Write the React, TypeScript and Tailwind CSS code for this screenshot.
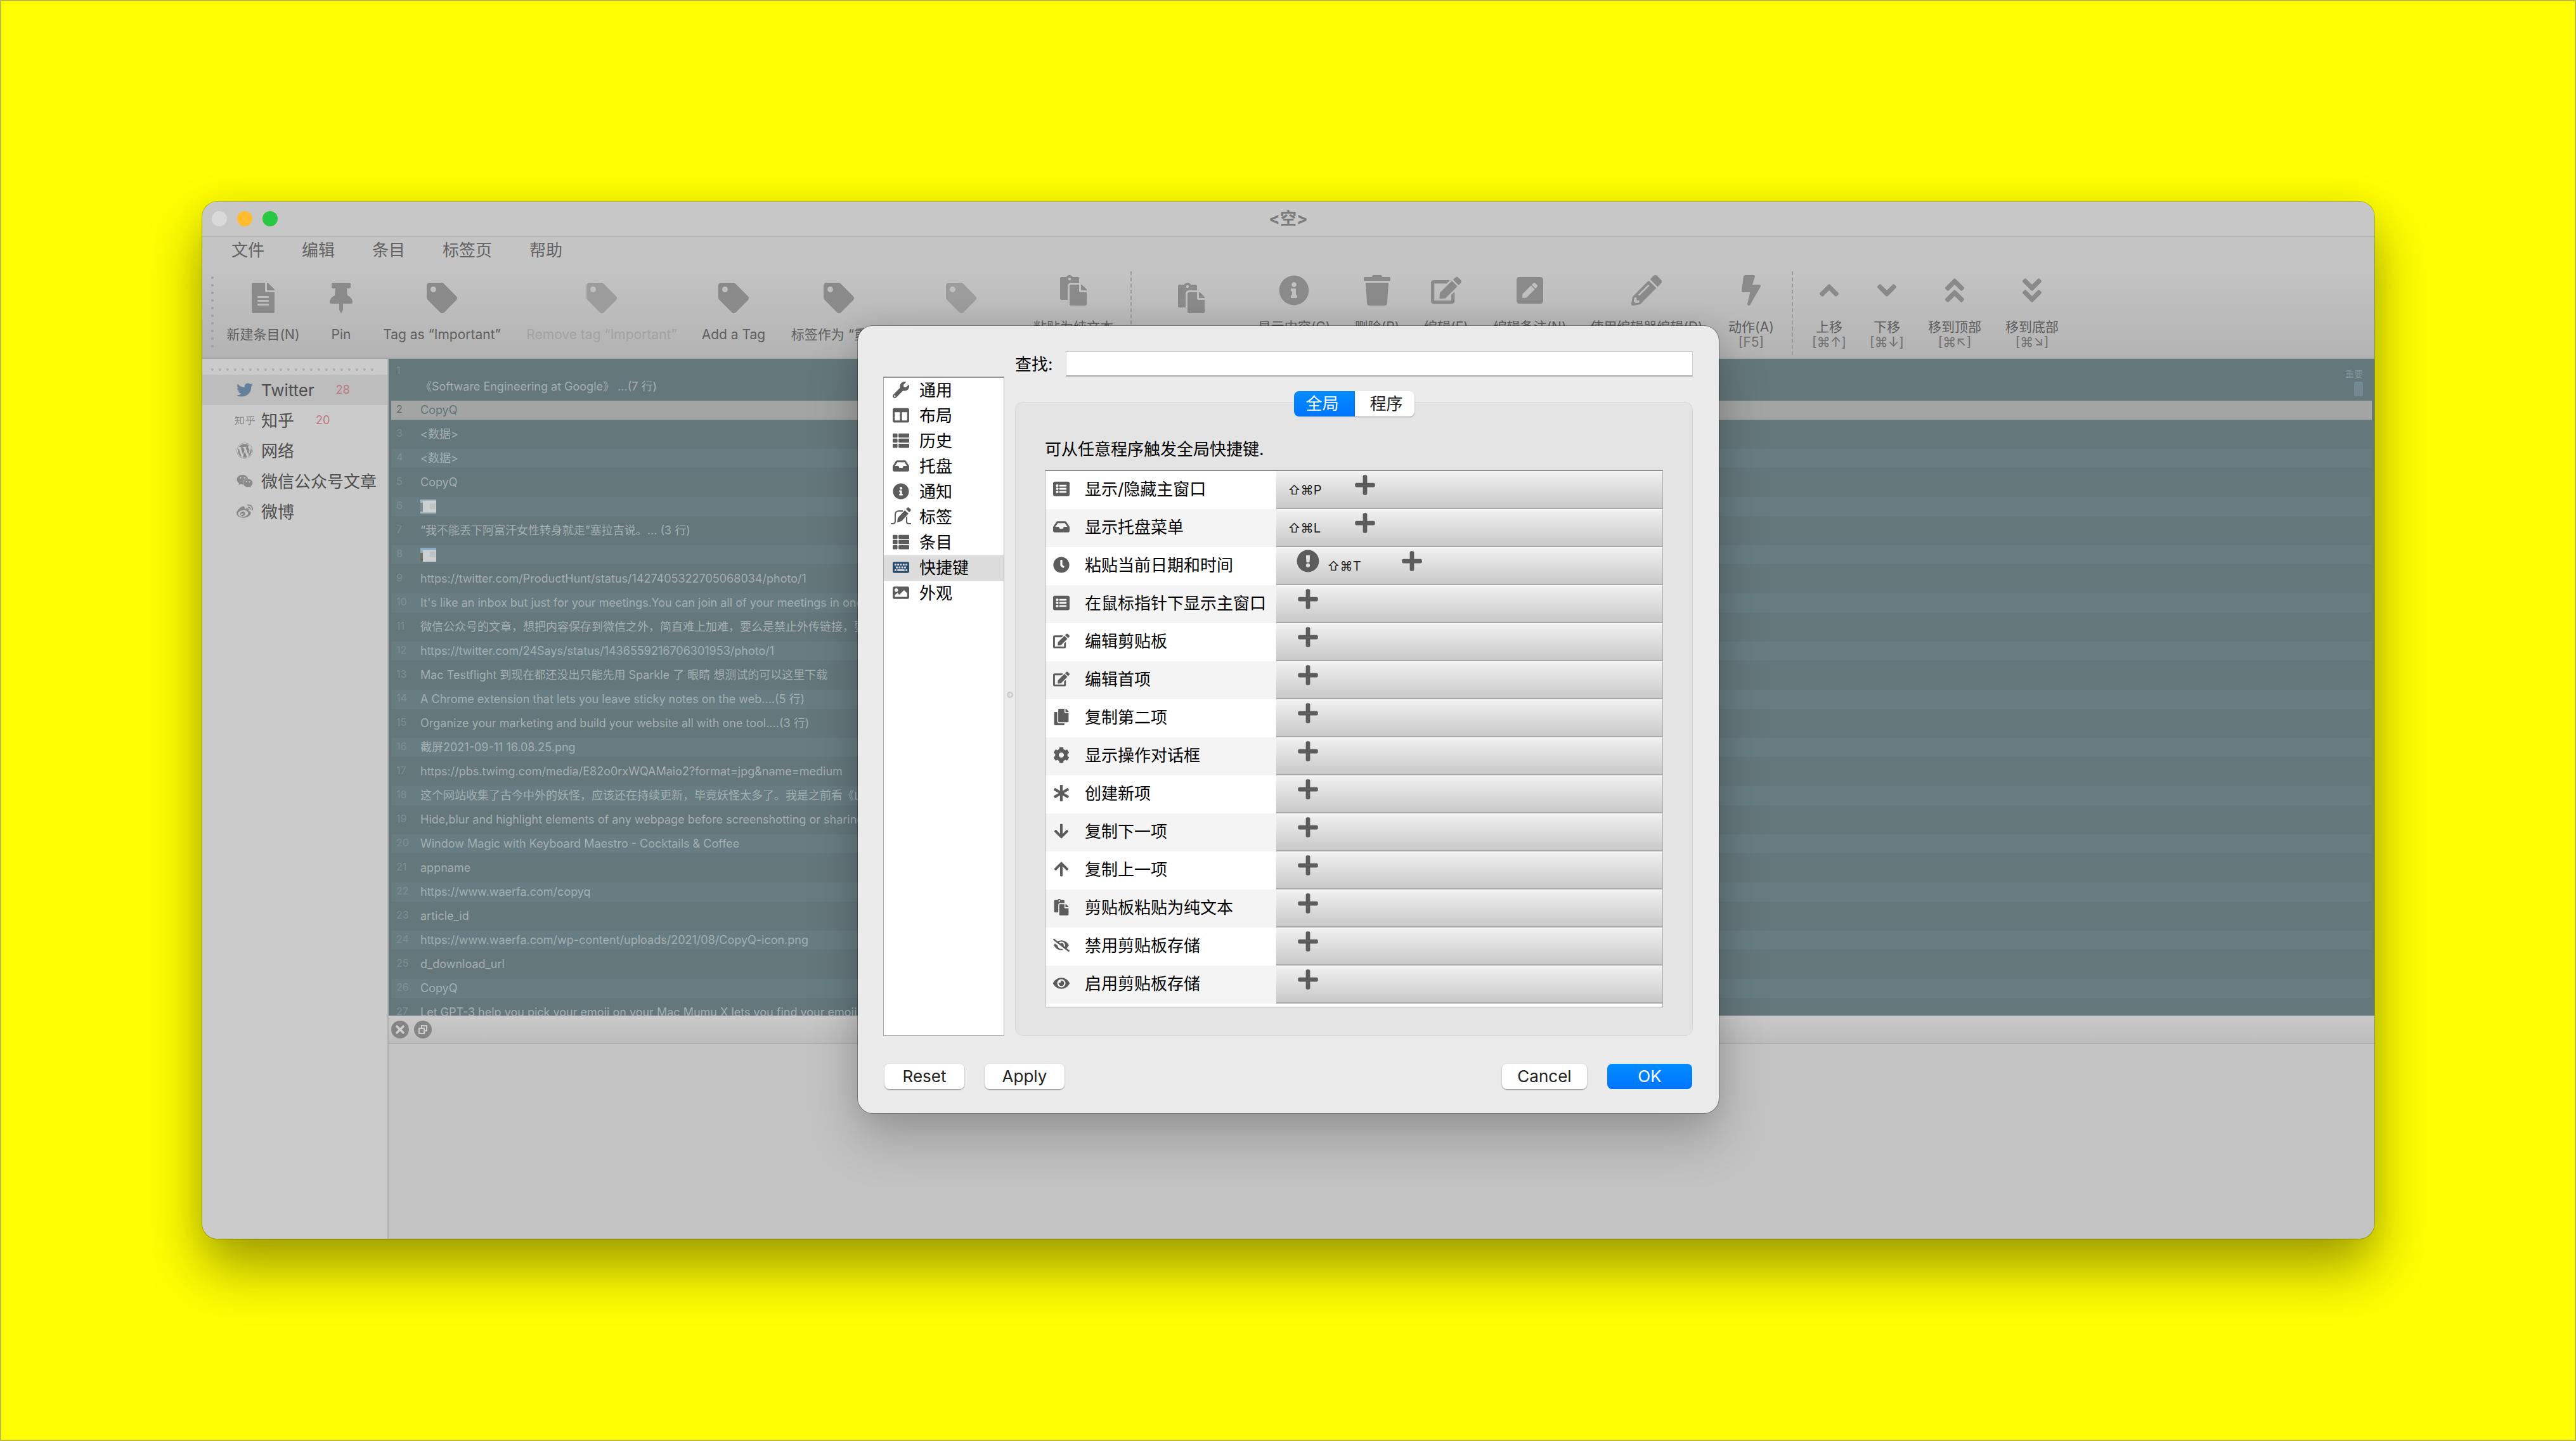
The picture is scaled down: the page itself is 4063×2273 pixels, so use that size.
import type { ReactNode } from "react";
import type { IconType } from "react-icons";
import {
  FaFileAlt, FaThumbtack, FaTag, FaPaste, FaInfoCircle, FaTrash, FaEdit, FaPenSquare, FaPencilAlt, FaBolt,
  FaAngleDoubleUp, FaAngleDoubleDown, FaTwitter, FaZhihu, FaWordpress, FaWeixin,
  FaWeibo, FaWrench, FaColumns, FaThList, FaInbox, FaKeyboard, FaImage, FaListAlt, FaClock, FaCopy, FaCog,
  FaAsterisk, FaArrowDown, FaArrowUp, FaEyeSlash, FaEye, FaExclamationCircle, FaPlus, FaAngleUp, FaAngleDown,
  FaTimes,
} from "react-icons/fa";

const MENUS = ["文件", "编辑", "条目", "标签页", "帮助"];

type Tool = { icon: IconType; label: string; key?: string; w: string; faded?: boolean };

const TOOLS_A: Tool[] = [
  { icon: FaFileAlt, label: "新建条目(N)", w: "w-[154px]" },
  { icon: FaThumbtack, label: "Pin", w: "w-[92px]" },
  { icon: FaTag, label: "Tag as “Important”", w: "w-[226px]" },
  { icon: FaTag, label: "Remove tag “Important”", w: "w-[278px]", faded: true },
  { icon: FaTag, label: "Add a Tag", w: "w-[138px]" },
  { icon: FaTag, label: "标签作为 “重要”", w: "w-[194px]" },
  { icon: FaTag, label: "移除标签 “重要”", w: "w-[192px]", faded: true },
  { icon: FaPaste, label: "粘贴为纯文本", key: "[⇧⌘V]", w: "w-[162px]" },
];

const TOOLS_B: Tool[] = [
  { icon: FaPaste, label: "粘贴", w: "w-[170px]" },
  { icon: FaInfoCircle, label: "显示内容(C)", key: "[F4]", w: "w-[154px]" },
  { icon: FaTrash, label: "删除(R)", key: "[⌫]", w: "w-[108px]" },
  { icon: FaEdit, label: "编辑(E)", key: "[F2]", w: "w-[110px]" },
  { icon: FaPenSquare, label: "编辑备注(N)", key: "[⇧F2]", w: "w-[154px]" },
  { icon: FaPencilAlt, label: "使用编辑器编辑(D)", key: "[⌘E]", w: "w-[214px]" },
  { icon: FaBolt, label: "动作(A)", key: "[F5]", w: "w-[116px]" },
];

const TOOLS_C: Tool[] = [
  { icon: FaAngleUp, label: "上移", key: "[⌘↑]", w: "w-[102px]" },
  { icon: FaAngleDown, label: "下移", key: "[⌘↓]", w: "w-[80px]" },
  { icon: FaAngleDoubleUp, label: "移到顶部", key: "[⌘↖]", w: "w-[134px]" },
  { icon: FaAngleDoubleDown, label: "移到底部", key: "[⌘↘]", w: "w-[110px]" },
];

const TABS: { icon: IconType; label: string; count?: string }[] = [
  { icon: FaTwitter, label: "Twitter", count: "28" },
  { icon: FaZhihu, label: "知乎", count: "20" },
  { icon: FaWordpress, label: "网络" },
  { icon: FaWeixin, label: "微信公众号文章" },
  { icon: FaWeibo, label: "微博" },
];

const CLIPS = [
  "《Software Engineering at Google》 ...(7 行)",
  "CopyQ",
  "<数据>",
  "<数据>",
  "CopyQ",
  "",
  "“我不能丢下阿富汗女性转身就走”塞拉吉说。... (3 行)",
  "",
  "https://twitter.com/ProductHunt/status/1427405322705068034/photo/1",
  "It's like an inbox but just for your meetings.You can join all of your meetings in one click",
  "微信公众号的文章，想把内容保存到微信之外，简直难上加难，要么是禁止外传链接，要么是",
  "https://twitter.com/24Says/status/1436559216706301953/photo/1",
  "Mac Testflight 到现在都还没出只能先用 Sparkle 了 眼睛 想测试的可以这里下载",
  "A Chrome extension that lets you leave sticky notes on the web....(5 行)",
  "Organize your marketing and build your website all with one tool....(3 行)",
  "截屏2021-09-11 16.08.25.png",
  "https://pbs.twimg.com/media/E82o0rxWQAMaio2?format=jpg&name=medium",
  "这个网站收集了古今中外的妖怪，应该还在持续更新，毕竟妖怪太多了。我是之前看《山海经》",
  "Hide,blur and highlight elements of any webpage before screenshotting or sharing",
  "Window Magic with Keyboard Maestro - Cocktails & Coffee",
  "appname",
  "https://www.waerfa.com/copyq",
  "article_id",
  "https://www.waerfa.com/wp-content/uploads/2021/08/CopyQ-icon.png",
  "d_download_url",
  "CopyQ",
  "Let GPT-3 help you pick your emoji on your Mac Mumu X lets you find your emoji",
];

function TagPenIcon({ className }: { className?: string }) {
  return (
    <svg viewBox="3 4 26 26" className={`overflow-visible ${className}`} fill="currentColor" aria-hidden="true">
      <path d="M0 28h3c3 0 4-1 4-4V14c0-4 2-6 6-6h6" fill="none" stroke="currentColor" strokeWidth="2" />
      <path d="M25 17v8c0 2 1 3 3 3h4" fill="none" stroke="currentColor" strokeWidth="2" />
      <path d="M22 7l6 5-11 12-7 2 1-7z" />
      <path d="M24 5l2-2c1-1 2-1 3 0l2 2c1 1 1 2 0 3l-2 2z" />
    </svg>
  );
}

function FloatIcon() {
  return (
    <svg viewBox="0 0 16 16" className="size-4" fill="none" stroke="currentColor" strokeWidth="2" aria-hidden="true">
      <rect x="2" y="6" width="8" height="8" />
      <path d="M6 6V2h8v8h-4" />
    </svg>
  );
}

const SECTIONS: { icon: IconType | typeof TagPenIcon; label: string }[] = [
  { icon: FaWrench, label: "通用" },
  { icon: FaColumns, label: "布局" },
  { icon: FaThList, label: "历史" },
  { icon: FaInbox, label: "托盘" },
  { icon: FaInfoCircle, label: "通知" },
  { icon: TagPenIcon, label: "标签" },
  { icon: FaThList, label: "条目" },
  { icon: FaKeyboard, label: "快捷键" },
  { icon: FaImage, label: "外观" },
];

const SHORTCUTS: { icon: IconType; label: string; keys?: string; warn?: boolean }[] = [
  { icon: FaListAlt, label: "显示/隐藏主窗口", keys: "⇧⌘P" },
  { icon: FaInbox, label: "显示托盘菜单", keys: "⇧⌘L" },
  { icon: FaClock, label: "粘贴当前日期和时间", keys: "⇧⌘T", warn: true },
  { icon: FaListAlt, label: "在鼠标指针下显示主窗口" },
  { icon: FaEdit, label: "编辑剪贴板" },
  { icon: FaEdit, label: "编辑首项" },
  { icon: FaCopy, label: "复制第二项" },
  { icon: FaCog, label: "显示操作对话框" },
  { icon: FaAsterisk, label: "创建新项" },
  { icon: FaArrowDown, label: "复制下一项" },
  { icon: FaArrowUp, label: "复制上一项" },
  { icon: FaPaste, label: "剪贴板粘贴为纯文本" },
  { icon: FaEyeSlash, label: "禁用剪贴板存储" },
  { icon: FaEye, label: "启用剪贴板存储" },
];

function ToolButton({ tool }: { tool: Tool }) {
  const Icon = tool.icon;
  return (
    <button
      className={`flex shrink-0 flex-col items-center whitespace-nowrap text-[21px] leading-6 ${tool.w} ${tool.key ? "pt-2.5" : "pt-[22px]"}`}
    >
      <Icon className={`size-12 shrink-0 ${tool.faded ? "text-[#9c9c9c]" : "text-[#8a8a8a]"}`} />
      <span className={`mt-[22px] ${tool.faded ? "text-[#a3a3a3]" : "text-[#606060]"}`}>{tool.label}</span>
      {tool.key && <span className="text-[#707070]">{tool.key}</span>}
    </button>
  );
}

function Separator({ className }: { className: string }) {
  return (
    <div className={`flex shrink-0 justify-center pt-1 ${className}`}>
      <div className="h-[132px] border-l-2 border-dashed border-[#9b9b9b]" />
    </div>
  );
}

function Thumb({ alt }: { alt: boolean }) {
  return (
    <svg viewBox="0 0 25 22" className="h-[22px] w-[25px]" role="img" aria-label="图片">
      <rect width="25" height="22" fill={alt ? "#8fadc4" : "#a9b9c2"} />
      <rect y={alt ? 8 : 5} width="6" height="14" fill={alt ? "#6f7060" : "#7d8c92"} />
      <rect x="4" y={alt ? 4 : 2} width="21" height="18" fill="#cdd0d2" />
      <rect x="15" y="6" width="9" height="9" fill="#c0c3c4" />
    </svg>
  );
}

function PushButton({ children, className }: { children: ReactNode; className: string }) {
  return (
    <button className={`flex h-10 items-center justify-center rounded-lg text-[26px] leading-8 ${className}`}>
      {children}
    </button>
  );
}

function Preferences() {
  return (
    <section
      role="dialog"
      aria-label="快捷键"
      className="absolute top-[196px] left-1/2 flex h-[1242px] w-[1358px] -translate-x-1/2 flex-col rounded-[24px] bg-[#ebebeb] pt-10 text-[26px] text-black shadow-[0_0_0_1px_rgba(0,0,0,0.3),0_40px_80px_rgba(0,0,0,0.22),0_0_40px_rgba(0,0,0,0.08)]"
    >
      <div className="flex min-h-0 flex-1 pr-[41px] pl-10">
        <div className="mt-10 flex h-[1040px] w-[191px] shrink-0 flex-col border border-t-2 border-[#b0b0b0] border-t-[#9a9a9a] bg-white">
          {SECTIONS.map(({ icon: Icon, label }) => {
            const active = label === "快捷键";
            return (
              <button key={label} className={`flex h-10 shrink-0 items-center pb-0.5 pl-3.5 ${active ? "bg-[#dcdcdc]" : ""}`}>
                <Icon className={`size-[26px] ${active ? "text-[#284b70]" : "text-[#5c5c5c]"}`} />
                <span className="pl-4">{label}</span>
              </button>
            );
          })}
        </div>
        <div className="flex w-[17px] shrink-0 items-center justify-center pb-10">
          <div className="size-2.5 rounded-full border-2 border-[#c9c9c9] bg-[#e2e2e2]" />
        </div>
        <div className="flex min-w-0 flex-1 flex-col">
          <div className="flex h-10 shrink-0 items-center">
            <label htmlFor="find" className="w-20 shrink-0">查找:</label>
            <input id="find" className="h-10 min-w-0 flex-1 border border-b-2 border-[#d0d0d0] border-b-[#ababab] bg-white px-2 outline-none" />
          </div>
          <div className="mt-10 flex h-[1000px] flex-col rounded-xl border border-[#d9d9d9] bg-[#e4e4e4] px-[46px]">
            <div className="-mt-[18px] flex h-10 items-center justify-center self-center" role="tablist">
              <button role="tab" aria-selected="true" className="flex h-10 w-24 items-center justify-center rounded-l-lg bg-gradient-to-b from-[#058cff] to-[#0074ff] pr-1.5 leading-8 text-white">
                全局
              </button>
              <button role="tab" aria-selected="false" className="flex h-10 w-[94px] items-center justify-center rounded-r-lg bg-white pl-1.5 leading-8 text-[#1c1c1c] shadow-[0_1px_2px_rgba(0,0,0,0.35)]">
                程序
              </button>
            </div>
            <p className="mt-8 leading-10">可从任意程序触发全局快捷键.</p>
            <div className="mt-3 h-[848px] overflow-hidden border border-t-2 border-[#adadad] border-t-[#8e8e8e] bg-white">
              <table className="w-full table-fixed border-collapse">
                <tbody>
                  {SHORTCUTS.map(({ icon: Icon, label, keys, warn }) => (
                    <tr key={label} className="h-[60px] even:bg-[#f4f4f4]">
                      <th scope="row" className="w-[364px] p-0 text-left font-normal">
                        <div className="flex items-center pb-1 pl-3 whitespace-nowrap">
                          <Icon className="size-[26px] text-[#5c5c5c]" />
                          <span className="pl-6">{label}</span>
                        </div>
                      </th>
                      <td className="p-0">
                        <div className="flex h-[60px] items-center border-t-2 border-b-2 border-t-[#f6f6f6] border-b-[#a9a9a9] bg-gradient-to-b from-[#f0f0f0] to-[#c9c9c9] pb-4 pl-[18px]">
                          {warn && <FaExclamationCircle className="ml-3.5 size-9 text-[#5c5c5c]" role="img" aria-label="冲突" />}
                          {keys && (
                            <button className={`mt-4 w-14 text-left text-xl leading-6 whitespace-nowrap text-[#1f1f1f] ${warn ? "ml-3" : ""}`}>
                              {keys}
                            </button>
                          )}
                          <button aria-label="添加快捷键" className={warn ? "ml-[60px]" : keys ? "ml-12" : "ml-3.5"}>
                            <FaPlus className="size-9 text-[#5c5c5c]" />
                          </button>
                        </div>
                      </td>
                    </tr>
                  ))}
                </tbody>
              </table>
            </div>
          </div>
        </div>
      </div>
      <div className="flex h-[78px] shrink-0 items-start pr-[42px] pl-[42px]">
        <PushButton className="w-[126px] bg-white text-[#222] shadow-[0_1px_2px_rgba(0,0,0,0.4)]">Reset</PushButton>
        <PushButton className="ml-8 w-[126px] bg-white text-[#222] shadow-[0_1px_2px_rgba(0,0,0,0.4)]">Apply</PushButton>
        <PushButton className="ml-auto w-[134px] bg-white text-[#222] shadow-[0_1px_2px_rgba(0,0,0,0.4)]">Cancel</PushButton>
        <PushButton className="ml-8 w-[134px] bg-gradient-to-b from-[#058cff] to-[#0074ff] text-white">OK</PushButton>
      </div>
    </section>
  );
}

export default function App() {
  return (
    <div className="flex min-h-screen flex-col border-2 border-[#bfbb38] bg-[#fffe02] pt-[316px] pr-[316px] pb-[317px] pl-[317px] font-['Inter','Noto_Sans_CJK_SC',sans-serif]">
      <main className="relative flex flex-1 flex-col rounded-[24px] bg-[#c3c3c3] shadow-[0_0_0_1px_rgba(0,0,0,0.25),0_45px_85px_rgba(0,0,0,0.38),0_0_50px_rgba(0,0,0,0.05)]">
        <header className="relative flex h-14 shrink-0 items-center justify-center rounded-t-[24px] border-b-2 border-[#b5b5b5] bg-[#c7c7c7]">
          <div className="absolute left-[15px] flex gap-4">
            <button aria-label="关闭" className="size-6 rounded-full bg-[#d9d9d9]" />
            <button aria-label="最小化" className="size-6 rounded-full bg-[#febc2e]" />
            <button aria-label="缩放" className="size-6 rounded-full bg-[#28c840]" />
          </div>
          <h1 className="text-[26px] leading-8 font-bold text-[#7a7a7a]">&lt;空&gt;</h1>
        </header>
        <nav className="flex h-[46px] shrink-0 items-center gap-[59px] bg-[#c4c4c4] pb-1 pl-[46px] text-[26px] leading-8 text-[#636363]">
          {MENUS.map((m) => (
            <button key={m}>{m}</button>
          ))}
        </nav>
        <div className="flex h-[146px] shrink-0 border-b-2 border-[#a6a6a6] bg-gradient-to-b from-[#c4c4c4] to-[#b3b3b3] pt-1" role="toolbar">
          <div className="mt-3 ml-3.5 flex w-[5px] shrink-0 flex-col gap-2">
            {Array.from({ length: 10 }, (_, i) => (
              <div key={i} className="size-1 shrink-0 rounded-full bg-[#9f9f9f]" />
            ))}
          </div>
          {TOOLS_A.map((t) => <ToolButton key={t.label} tool={t} />)}
          <Separator className="w-5" />
          {TOOLS_B.map((t) => <ToolButton key={t.label} tool={t} />)}
          <Separator className="w-3.5" />
          {TOOLS_C.map((t) => <ToolButton key={t.label} tool={t} />)}
        </div>
        <div className="flex min-h-0 flex-1">
          <aside className="w-[294px] shrink-0 rounded-bl-[24px] border-r-2 border-[#b0b0b0] bg-[#cbcbcb]">
            <div className="flex h-[25px] items-center gap-2 pt-2 pl-3.5">
              {Array.from({ length: 22 }, (_, i) => (
                <div key={i} className="size-1 shrink-0 rounded-full bg-[#adadad]" />
              ))}
            </div>
            {TABS.map(({ icon: Icon, label, count }, i) => (
              <button key={label} className={`flex h-12 w-full items-center pl-[51px] whitespace-nowrap ${i === 0 ? "bg-[#bdbdbd]" : ""}`}>
                <span className="flex w-8 justify-center">
                  <Icon className={i === 0 ? "size-[26px] text-[#64809a]" : i === 1 ? "size-8 text-[#8a8a8a]" : "size-[26px] text-[#8a8a8a]"} />
                </span>
                <span className="pl-2.5 text-[26px] text-[#4e4e4e]">{label}</span>
                {count && <span className="pl-[34px] text-lg text-[#bb7a80]">{count}</span>}
              </button>
            ))}
          </aside>
          <div className="flex min-w-0 flex-1 flex-col">
            <ol className="h-[1036px] shrink-0 overflow-hidden bg-[#64777b] text-lg text-[#a3afb1]">
              {CLIPS.map((text, i) => {
                const first = i === 0;
                const selected = i === 1;
                const bg = selected ? "bg-[#a3a5a4] text-[#5f7577]" : i % 2 === 1 ? "bg-[#687d82]" : "";
                return (
                  <li key={i} className={first ? "h-[66px]" : "h-[38px] pr-1 pl-1"}>
                    <div className={`flex whitespace-nowrap ${first ? "h-[66px] pl-1" : "h-[30px] items-center"} ${bg}`}>
                      <span className={`w-[46px] shrink-0 pl-2 text-[16px] leading-6 ${first ? "pt-1.5" : "pb-1"} ${selected ? "text-[#5e6a6b]" : "text-[#7d9093]"}`}>{i + 1}</span>
                      {i === 5 || i === 7 ? <Thumb alt={i === 7} /> : <span className={first ? "pt-[30px]" : ""}>{text}</span>}
                      {first && (
                        <span className="mt-4 mr-[18px] ml-auto flex flex-col items-end gap-1 text-sm leading-4 text-[#82959a]">
                          重要
                          <span className="h-[23px] w-3.5 rounded-xs bg-[#738a90]" />
                        </span>
                      )}
                    </div>
                  </li>
                );
              })}
            </ol>
            <div className="flex h-[45px] shrink-0 items-center gap-2 border-b-2 border-[#b0b0b0] bg-gradient-to-b from-[#c9c9c9] to-[#bdbdbd] pl-1 text-[#cdcdcd]">
              <button aria-label="关闭面板" className="flex size-7 items-center justify-center rounded-full bg-[#848484]"><FaTimes className="size-5" /></button>
              <button aria-label="浮动面板" className="flex size-7 items-center justify-center rounded-full bg-[#848484]"><FloatIcon /></button>
            </div>
          </div>
        </div>
        <Preferences />
      </main>
    </div>
  );
}
